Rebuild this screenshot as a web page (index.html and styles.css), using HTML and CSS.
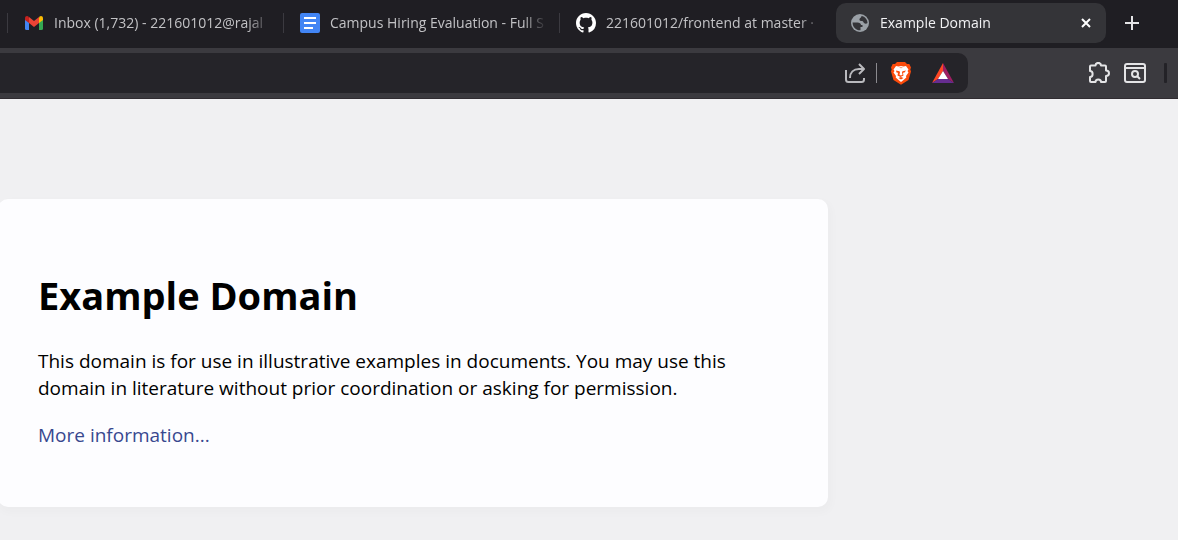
FILE: index.html
```html
<!DOCTYPE html>
<html lang="en">
<head>
<meta charset="utf-8">
<title>Example Domain</title>
<link rel="stylesheet" href="styles.css">
</head>
<body>
<header class="browser">
  <nav class="tabs" aria-label="Open tabs">
    <button class="tab" type="button">
      <svg class="tab-icon" viewBox="0 0 20 20" aria-hidden="true">
        <path fill="#4285f4" d="M1 6v9.500q0 1.500 1.500 1.500H5V9z"/>
        <path fill="#34a853" d="M15 9v8h2.500q1.500 0 1.500-1.500V6z"/>
        <path fill="#fbbc04" d="M15 5v5l4-3V5.200c0-2-2-2.700-3.500-1.600z"/>
        <path fill="#c5221f" d="M5 5v5L1 7V5.200c0-2 2-2.700 3.500-1.600z"/>
        <path fill="#ea4335" d="M5 10V4l5 4 5-4v6l-5 4z"/>
      </svg>
      <span class="tab-title">Inbox (1,732) - 221601012@rajal</span>
    </button>
    <button class="tab" type="button">
      <svg class="tab-icon" viewBox="0 0 20 20" aria-hidden="true">
        <rect width="20" height="20" rx="2" fill="#4285f4"/>
        <path fill="#fff" d="M4 4h12v2H4zM4 9h12v2H4zM4 14h9v2H4z"/>
      </svg>
      <span class="tab-title">Campus Hiring Evaluation - Full S</span>
    </button>
    <button class="tab" type="button">
      <svg class="tab-icon" viewBox="0 0 16 16" aria-hidden="true">
        <path fill="#fff" d="M8 0C3.580 0 0 3.580 0 8c0 3.540 2.290 6.530 5.470 7.590.4.070.55-.17.55-.38 0-.19-.01-.82-.01-1.490-2.010.37-2.530-.49-2.690-.94-.09-.23-.48-.94-.82-1.130-.28-.15-.68-.52-.01-.53.63-.01 1.080.58 1.230.82.72 1.210 1.870.87 2.330.66.07-.52.28-.87.51-1.070-1.780-.2-3.640-.89-3.640-3.950 0-.87.31-1.590.82-2.150-.08-.2-.36-1.020.08-2.120 0 0 .67-.21 2.200.82.64-.18 1.320-.27 2-.27s1.360.09 2 .27c1.530-1.040 2.200-.82 2.200-.82.44 1.100.16 1.920.08 2.120.51.56.82 1.270.82 2.150 0 3.070-1.870 3.750-3.650 3.950.29.25.54.73.54 1.480 0 1.070-.01 1.930-.01 2.200 0 .21.15.46.55.38A8.010 8.010 0 0 0 16 8c0-4.420-3.580-8-8-8z"/>
      </svg>
      <span class="tab-title">221601012/frontend at master ·</span>
    </button>
    <div class="tab tab-active">
      <svg class="tab-icon" viewBox="0 0 20 20" aria-hidden="true">
        <circle cx="10" cy="10" r="9" fill="#9aa0a6"/>
        <path fill="#343438" d="M11.500 3c3.500.6 6 3.500 6 7-1 1-2.500 1-3.500 0-.9-.9-.5-2-2-2-1.700 0-3-.5-2.500-2 .3-1 2-1.300 2-3z"/>
        <path fill="#343438" d="M2.600 9.500h4.900c2 0 3.500 1 3.500 2.500h1.500v2h-2v3.300C6 17.500 2.600 14.200 2.600 9.500z"/>
      </svg>
      <button class="tab-title tab-select" type="button">Example Domain</button>
      <button class="icon-button" type="button" aria-label="Close tab">
        <svg class="close-icon" viewBox="0 0 12 12" aria-hidden="true"><path d="M2 2l8 8M10 2l-8 8"/></svg>
      </button>
    </div>
    <button class="icon-button new-tab" type="button" aria-label="New tab">
      <svg class="plus-icon" viewBox="0 0 16 16" aria-hidden="true"><path d="M8 1v14M1 8h14"/></svg>
    </button>
  </nav>
  <div class="toolbar">
    <div class="address">
      <button class="icon-button" type="button" aria-label="Share">
        <svg class="tool-icon muted" viewBox="0 0 22 22" aria-hidden="true"><path d="M2 8v9.500Q2 20 4.500 20h13q2.500 0 2.500-2.500V16M6 16c0-5.500 3.500-9 9-9h4M15 2l5 5-5 5"/></svg>
      </button>
      <span class="divider"></span>
      <button class="icon-button" type="button" aria-label="Shields">
        <svg class="brand-icon" viewBox="0 0 24 24" aria-hidden="true">
          <path fill="#fb4b0b" d="M8 1h8l2 2 2.300 0 1.700 3.500-.7 2 .7 2-2.500 8.500L12 23.700 4.500 19 2 10.500l.7-2-.7-2L3.700 3 6 3z"/>
          <path fill="#fff" d="M7 5l2.500.5L12 5l2.500.5L17 5l2.500 3.500-1 1.500 1 1.500-2.500 3.500.3 1.500L14.500 19 12 21l-2.500-2-2.800-2.500L7 15l-2.500-3.500 1-1.500-1-1.500z"/>
          <path fill="#fb4b0b" d="M7 9.500l3.500.7.5 1-.5 2.600 1.500.7 1.500-.7-.5-2.600.5-1 3.500-.7-1.500 2-1.500.2.500 2.800-3 1.500-3-1.500.5-2.800-1.500-.2zM9.500 17l2.500-1 2.500 1-2.500 1.500zM10 6.500h4l-2 .8z"/>
        </svg>
      </button>
      <button class="icon-button" type="button" aria-label="Rewards">
        <svg class="brand-icon" viewBox="0 0 24 24" aria-hidden="true">
          <path fill="#ff4724" d="M12 2v8l-5 8-6 4z"/>
          <path fill="#9e1f63" d="M12 2l11 20-6-4-5-8z"/>
          <path fill="#662d91" d="M1 22l6-4h10l6 4z"/>
          <path fill="#fff" d="M12 10l5 8H7z"/>
        </svg>
      </button>
    </div>
    <div class="actions">
      <button class="icon-button" type="button" aria-label="Extensions">
        <svg class="tool-icon" viewBox="0 0 22 22" aria-hidden="true"><path d="M3 3.500h4.500C7.500 0 13 0 13 3.500h4q1 0 1 1v4c4 0 4 5.500 0 5.500v5q0 1-1 1h-4c0-3.500-5.500-3.500-5.500 0H3q-1 0-1-1v-4c3.500 0 3.500-6 0-6v-4.500q0-1 1-1z"/></svg>
      </button>
      <button class="icon-button" type="button" aria-label="Search tabs">
        <svg class="tool-icon" viewBox="0 0 22 22" aria-hidden="true"><rect x="1" y="2" width="20" height="18" rx="2"/><path d="M1 6h20M13 14l3 3"/><circle cx="11" cy="12" r="3"/></svg>
      </button>
      <span class="edge"></span>
    </div>
  </div>
</header>
<main class="page">
  <article class="card">
    <h1 class="heading">Example Domain</h1>
    <p class="text">This domain is for use in illustrative examples in documents. You may use this domain in literature without prior coordination or asking for permission.</p>
    <p class="text"><a class="link" href="#more">More information...</a></p>
  </article>
</main>
</body>
</html>
```
FILE: styles.css
```css
* {
  box-sizing: border-box;
}

body {
  margin: 0;
  min-height: 100vh;
  display: flex;
  flex-direction: column;
  overflow-x: hidden;
  background: #f0f0f2;
  font-family: "Segoe UI", "Open Sans", "Noto Sans", sans-serif;
}

button {
  border: 0;
  padding: 0;
  background: none;
  color: inherit;
  font: inherit;
  text-align: left;
}

svg {
  display: block;
  flex: none;
}

.tabs {
  display: flex;
  align-items: center;
  height: 48px;
  padding: 0 8px 2px 7px;
  background: #1f1e23;
  color: #c2c2c5;
  font-size: 14px;
  line-height: 20px;
}

.tab {
  display: flex;
  align-items: center;
  flex: 0 1 276px;
  min-width: 0;
  height: 20px;
  padding: 0 12px 0 16px;
  gap: 10px;
  border-left: 1px solid #3b3a40;
}

.tab-active {
  flex-basis: 270px;
  height: 40px;
  margin-left: 1px;
  padding: 0 14px;
  border: 0;
  border-radius: 10px;
  background: #343438;
  color: #f2f2f4;
}

.tab-icon {
  width: 20px;
  height: 20px;
}

.tab-title {
  flex: 1;
  min-width: 0;
  overflow: hidden;
  white-space: nowrap;
  mask-image: linear-gradient(to left, transparent, #000 24px);
}

.icon-button {
  display: grid;
  place-items: center;
  flex: none;
}

.close-icon,
.plus-icon,
.tool-icon {
  fill: none;
  stroke: #e4e4e6;
  stroke-width: 2;
}

.close-icon {
  width: 12px;
  height: 12px;
  stroke: #fff;
}

.plus-icon {
  width: 16px;
  height: 16px;
}

.new-tab {
  margin-left: 18px;
}

.toolbar {
  display: flex;
  padding: 5px 0;
  border-bottom: 1px solid #302c31;
  background: #3b3a3f;
}

.address {
  display: flex;
  flex: 1;
  align-items: center;
  justify-content: flex-end;
  height: 40px;
  padding-right: 13px;
  border-radius: 0 10px 10px 0;
  background: #252429;
}

.tool-icon {
  width: 22px;
  height: 22px;
  stroke-linejoin: round;
}

.muted {
  stroke: #b9b9bd;
}

.divider {
  width: 1px;
  height: 20px;
  margin: 0 12px 0 10px;
  background: #8b8a8f;
}

.brand-icon {
  width: 24px;
  height: 24px;
}

.address .icon-button + .icon-button {
  margin-left: 18px;
}

.actions {
  display: flex;
  align-items: center;
  justify-content: flex-end;
  flex: none;
  width: 210px;
  gap: 14px;
  padding-right: 11px;
}

.edge {
  width: 3px;
  height: 20px;
  margin-left: 4px;
  border-radius: 1px;
  background: #232227;
}

.page {
  flex: 1;
  padding-top: 100px;
}

.card {
  width: 830px;
  max-width: 100%;
  margin-left: -2px;
  padding: 69px 40px 58px;
  border-radius: 10px;
  background: #fdfdff;
  box-shadow: 2px 4px 9px 2px rgba(0, 0, 0, 0.02);
}

.heading {
  margin: 0;
  font-size: 38px;
  font-weight: 700;
  line-height: 54px;
  color: #000;
}

.text {
  margin: 20px 0 0;
  max-width: 720px;
  font-size: 19px;
  line-height: 27px;
  color: #000;
}

.heading + .text {
  margin-top: 26px;
}

.link {
  color: #38488f;
  text-decoration: none;
}
```
